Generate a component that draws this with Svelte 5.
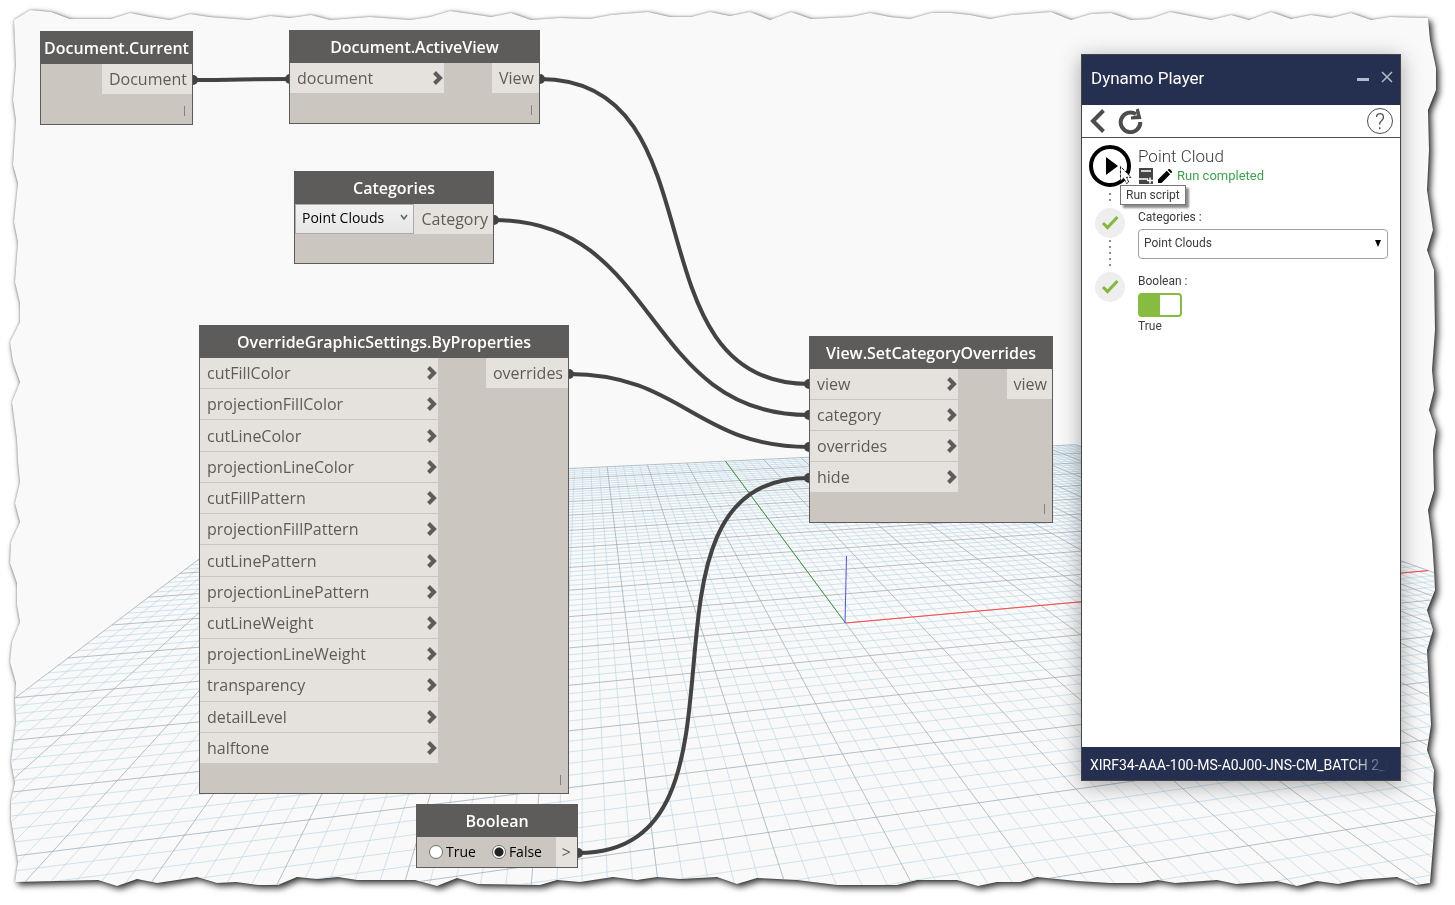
<script lang="ts">
  interface GraphNode {
    id: string;
    title: string;
    x: number;
    y: number;
    width: number;
    height: number;
    inputWidth: number;
    inputs: string[];
    output: string;
    lacing: boolean;
  }

  type Point = [number, number];

  const nodes: GraphNode[] = [
    { id: 'current', title: 'Document.Current', x: 40, y: 31, width: 153, height: 94, inputWidth: 0, inputs: [], output: 'Document', lacing: true },
    { id: 'active', title: 'Document.ActiveView', x: 289, y: 30, width: 251, height: 94, inputWidth: 154, inputs: ['document'], output: 'View', lacing: true },
    { id: 'categories', title: 'Categories', x: 294, y: 171, width: 200, height: 93, inputWidth: 119, inputs: [], output: 'Category', lacing: false },
    {
      id: 'settings', title: 'OverrideGraphicSettings.ByProperties', x: 199, y: 325, width: 370, height: 469, inputWidth: 238,
      inputs: [
        'cutFillColor', 'projectionFillColor', 'cutLineColor', 'projectionLineColor', 'cutFillPattern',
        'projectionFillPattern', 'cutLinePattern', 'projectionLinePattern', 'cutLineWeight',
        'projectionLineWeight', 'transparency', 'detailLevel', 'halftone',
      ],
      output: 'overrides', lacing: true,
    },
    { id: 'set', title: 'View.SetCategoryOverrides', x: 809, y: 336, width: 244, height: 187, inputWidth: 148, inputs: ['view', 'category', 'overrides', 'hide'], output: 'view', lacing: true },
    { id: 'boolean', title: 'Boolean', x: 416, y: 804, width: 162, height: 64, inputWidth: 138, inputs: [], output: '>', lacing: false },
  ];

  const wires: { from: Point; to: Point }[] = [
    { from: [193, 80], to: [290, 79] },
    { from: [540, 79], to: [809, 384] },
    { from: [494, 220], to: [809, 415] },
    { from: [569, 374], to: [809, 447] },
    { from: [578, 853], to: [809, 478] },
  ];

  function wirePath(from: Point, to: Point): string {
    const reach = 0.45 * Math.hypot(to[0] - from[0], to[1] - from[1]);
    return `M${from[0]} ${from[1]}C${from[0] + reach} ${from[1]} ${to[0] - reach} ${to[1]} ${to[0]} ${to[1]}`;
  }

  // Ground plane, one unit per major square, seen in perspective
  const ORIGIN: Point = [845.5, 623];
  const VANISH_X: Point = [4758, 271];
  const VANISH_Y: Point = [583, 269];

  function project(u: number, v: number): Point {
    const a = 0.0175 * u;
    const b = -0.0842 * v;
    const w = 1 + a + b;
    return [
      (ORIGIN[0] + a * VANISH_X[0] + b * VANISH_Y[0]) / w,
      (ORIGIN[1] + a * VANISH_X[1] + b * VANISH_Y[1]) / w,
    ];
  }

  function segment(u1: number, v1: number, u2: number, v2: number): string {
    const [x1, y1] = project(u1, v1);
    const [x2, y2] = project(u2, v2);
    return `M${x1.toFixed(1)} ${y1.toFixed(1)}L${x2.toFixed(1)} ${y2.toFixed(1)}`;
  }

  let minorGrid = '';
  let majorGrid = '';
  for (let i = -50; i <= 50; i++) {
    const k = i / 5;
    const lines = segment(k, -10, k, 8) + (k <= 8 ? segment(-10, k, 10, k) : '');
    if (i % 5 === 0) majorGrid += lines;
    else minorGrid += lines;
  }

  // Torn outline of the sheet, clockwise from the top left
  const tear = [
    '14,20 30,10 51,12 70,19 111,19 130,13 150,17 170,20 190,14 209,17 249,20 270,16 290,18 311,15 330,20 370,17 410,20 430,17 450,11 471,14 491,17 511,13 531,20',
    '560,18 590,19 611,15 648,12 670,17 691,17 710,12 730,16 750,12 770,20 791,12 811,19 851,17 870,13 890,17 910,19 931,13 951,13 970,15 990,19 1011,15 1051,12',
    '1071,20 1091,14 1111,13 1131,20 1150,19 1170,12 1211,20 1231,15 1249,20 1271,12 1291,19 1311,15 1331,18 1351,13 1371,20 1390,17 1428,18',
    '1430,40 1436,68 1436,90 1428,110 1429,150 1427,190 1433,230 1427,250 1434,270 1435,330 1432,370 1434,390 1429,410 1436,430 1433,450 1434,490 1428,510 1432,540',
    '1434,570 1435,590 1427,610 1433,630 1427,650 1431,725 1427,750 1434,770 1433,790 1436,810 1430,883',
    '1416,885 1397,877 1358,880 1338,884 1317,881 1297,886 1277,881 1236,884 1217,880 1175,883 1158,880 1140,883 1110,883 1077,881 1037,877 1020,882 997,882 978,886',
    '957,880 917,880 897,885 837,885 797,880 757,878 737,884 717,877 680,879 657,877 637,880 613,877 580,882 557,880 540,885 478,884 457,878 437,886 415,880 357,880',
    '338,877 317,879 297,877 278,885 258,885 236,882 217,883 197,877 157,883 137,879 117,886 98,880 15,882',
    '18,862 11,820 11,800 15,783 11,762 16,722 15,700 16,683 10,662 12,642 20,622 17,605 17,583 10,563 11,542 20,522 15,503 20,482 18,462 17,440',
    '12,402 20,382 13,362 10,342 20,322 20,303 15,282 18,242 14,222 18,183 13,165 16,120 13,100 16,65',
  ].join(' ');

  let category = $state('Point Clouds');
  let playerCategory = $state('Point Clouds');
  let hidden = $state('False');
  let playerBoolean = $state(true);
</script>

<div class="sheet">
  <main class="workspace">
    <svg class="backdrop" width="1455" height="905" aria-hidden="true">
      <defs>
        <clipPath id="tear"><polygon points={tear} /></clipPath>
      </defs>
      <path class="grid-minor" d={minorGrid} />
      <path class="grid-major" d={majorGrid} />
      <path class="axis-x" d={segment(0, 0, 10, 0)} />
      <path class="axis-y" d={segment(0, 0, 0, -10)} />
      <path class="axis-z" d="M845 623L846.5 556" />
      {#each wires as wire}
        <path class="wire" d={wirePath(wire.from, wire.to)} />
        <circle class="wire-end" cx={wire.from[0]} cy={wire.from[1]} r="5" />
        <circle class="wire-end" cx={wire.to[0]} cy={wire.to[1]} r="5" />
      {/each}
    </svg>

    {#each nodes as node (node.id)}
      <section
        class="node"
        style="left: {node.x}px; top: {node.y}px; width: {node.width}px; height: {node.height}px; --input-width: {node.inputWidth}px"
      >
        <h2 class="node-title">{node.title}</h2>
        <div class="node-body" class:compact={node.id === 'boolean'}>
          {#if node.id === 'categories'}
            <div class="node-select">
              <select aria-label="Category" bind:value={category}>
                <option>Point Clouds</option>
                <option>Walls</option>
              </select>
              <svg viewBox="0 0 8 6" width="8" height="6" aria-hidden="true"><path d="M1 1l3 4 3-4" /></svg>
            </div>
          {:else if node.id === 'boolean'}
            <div class="radios">
              <label><input type="radio" name="hide" value="True" bind:group={hidden} />True</label>
              <label><input type="radio" name="hide" value="False" bind:group={hidden} />False</label>
            </div>
          {:else}
            <ul class="inputs">
              {#each node.inputs as input}
                <li class="input">
                  <span>{input}</span>
                  <svg viewBox="0 0 10 14" width="10" height="14" aria-hidden="true"><path d="M1.5 1.5L7 7l-5.500 5.500" /></svg>
                </li>
              {/each}
            </ul>
          {/if}
          <span class="output">{node.output}</span>
        </div>
        {#if node.lacing}<span class="lacing">l</span>{/if}
      </section>
    {/each}

    <aside class="player">
      <header class="player-head">
        <h1>Dynamo Player</h1>
        <button class="plain" aria-label="Minimize">
          <svg viewBox="0 0 12 12" width="12" height="12"><path d="M0 8.500H12" stroke-width="3" /></svg>
        </button>
        <button class="plain" aria-label="Close">
          <svg viewBox="0 0 12 12" width="12" height="12"><path d="M1 1l10 10M11 1L1 11" stroke-width="1.500" /></svg>
        </button>
      </header>

      <nav class="toolbar">
        <button class="plain" aria-label="Back">
          <svg viewBox="0 0 16 24" width="16" height="24"><path d="M14.500 1.500L4 12l10.500 10.500" stroke-width="4" /></svg>
        </button>
        <button class="plain" aria-label="Refresh">
          <svg viewBox="0 0 25 26" width="25" height="26">
            <path d="M18 6.200A9.800 9.800 0 1 0 22.300 14" stroke-width="4" />
            <path d="M20.800 0.500L23.500 11L13 11.500V8.500L18.800 7.500L17.800 1.500Z" fill="#4d4d4d" stroke="none" />
          </svg>
        </button>
        <button class="plain help" aria-label="Help">?</button>
      </nav>

      <div class="steps">
        <div class="step script">
          <div class="marker">
            <button class="plain play" aria-label="Run script">
              <svg viewBox="0 0 42 42" width="42" height="42">
                <circle cx="21" cy="21" r="19" fill="none" stroke="#000" stroke-width="4" />
                <path d="M17 12v18l12-9z" fill="#000" stroke="none" />
              </svg>
            </button>
            <i class="dots short"></i>
            <svg class="cursor" viewBox="0 0 12 19" width="12" height="19" aria-hidden="true">
              <path d="M.5.5v14.500l3.300-3 2.700 5.500 2.400-1.200-2.500-5H11z" fill="#fff" stroke="#222" stroke-dasharray="3 1" />
            </svg>
            <span class="tooltip" role="tooltip">Run script</span>
          </div>
          <div class="info">
            <h3>Point Cloud</h3>
            <div class="status">
              <svg viewBox="0 0 14 16" width="14" height="16" aria-hidden="true">
                <path d="M0 0h14v16H0z" fill="#444" stroke="none" />
                <path d="M2 3h10M0 11h9M8 12.500h6M11 9.500v6" stroke="#fff" stroke-width="1.500" />
              </svg>
              <svg viewBox="0 0 14 14" width="14" height="14" aria-hidden="true">
                <path d="M0 14v-3.500L8.800 1.800l3.400 3.400L3.500 14zM9.700.900l.6-.6q.8-.6 1.600 0l1.800 1.800q.6.8 0 1.600l-.7.6z" fill="#000" stroke="none" />
              </svg>
              <span>Run completed</span>
            </div>
          </div>
        </div>

        <div class="step">
          <div class="marker">
            <svg viewBox="0 0 30 30" width="30" height="30" aria-hidden="true">
              <circle cx="15" cy="15" r="15" fill="#eee" />
              <path d="M8 15l4.500 4.500L22.500 9" stroke="#82b93c" stroke-width="3" />
            </svg>
            <i class="dots"></i>
          </div>
          <div class="field">
            <label for="player-category">Categories :</label>
            <div class="combo">
              <select id="player-category" bind:value={playerCategory}>
                <option>Point Clouds</option>
                <option>Walls</option>
              </select>
              <svg viewBox="0 0 6 7" width="6" height="7" aria-hidden="true"><path d="M0 0h6L3 7z" /></svg>
            </div>
          </div>
        </div>

        <div class="step">
          <div class="marker">
            <svg viewBox="0 0 30 30" width="30" height="30" aria-hidden="true">
              <circle cx="15" cy="15" r="15" fill="#eee" />
              <path d="M8 15l4.500 4.500L22.500 9" stroke="#82b93c" stroke-width="3" />
            </svg>
          </div>
          <div class="field">
            <label for="player-boolean">Boolean :</label>
            <input id="player-boolean" class="switch" type="checkbox" bind:checked={playerBoolean} />
            <span>{playerBoolean ? 'True' : 'False'}</span>
          </div>
        </div>
      </div>

      <footer class="player-foot"><span>XIRF34-AAA-100-MS-A0J00-JNS-CM_BATCH 2_E</span></footer>
    </aside>
  </main>
</div>

<style>
  :global(body) {
    margin: 0;
    background: #fff;
  }

  .sheet {
    filter: drop-shadow(0 0 1px rgba(0, 0, 0, 0.4)) drop-shadow(3px 3px 3px rgba(0, 0, 0, 0.8));
  }

  .workspace {
    position: relative;
    min-height: 100vh;
    overflow: hidden;
    background: #f9f9f9;
    clip-path: url(#tear);
    font-family: 'Open Sans', 'Noto Sans', sans-serif;
    font-size: 16px;
    line-height: 20px;
    color: #5e5c5a;
  }

  h1,
  h2,
  h3,
  ul {
    margin: 0;
    padding: 0;
    list-style: none;
  }

  .backdrop {
    position: absolute;
    top: 0;
    left: 0;
    fill: none;
  }

  .grid-minor {
    stroke: #b4d3e4;
    stroke-opacity: 0.6;
  }

  .grid-major {
    stroke: #9dabb5;
    stroke-opacity: 0.75;
  }

  .axis-x {
    stroke: #ff4a4a;
  }

  .axis-y {
    stroke: #3a9c3a;
  }

  .axis-z {
    stroke: #5050ff;
  }

  .wire {
    stroke: #434343;
    stroke-width: 4;
  }

  .wire-end {
    fill: #434343;
  }

  /* Graph nodes */
  .node {
    position: absolute;
    box-sizing: border-box;
    display: flex;
    flex-direction: column;
    background: #cbc6bf;
    border: 1px solid #5e5c5a;
  }

  .node-title {
    flex: none;
    background: #5e5c5a;
    color: #fff;
    font-size: 16px;
    font-weight: 600;
    line-height: 32px;
    text-align: center;
    white-space: nowrap;
  }

  .node-body {
    flex: 1;
    display: grid;
    grid-template-columns: var(--input-width) auto;
    justify-content: space-between;
    padding-bottom: 30px;
  }

  .node-body.compact {
    padding-bottom: 0;
  }

  .inputs {
    display: flex;
    flex-direction: column;
  }

  .input {
    flex: 1;
    display: flex;
    align-items: center;
    justify-content: space-between;
    padding: 0 1px 0 7px;
    background: #e5e2dd;
  }

  .input + .input {
    border-top: 1px solid #cbc6bf;
  }

  .input svg {
    fill: none;
    stroke: #5e5c5a;
    stroke-width: 4;
  }

  .output {
    height: 30px;
    padding: 0 5px 0 7px;
    background: #e5e2dd;
    line-height: 30px;
  }

  .lacing {
    position: absolute;
    right: 6px;
    bottom: 3px;
    font-size: 12px;
    line-height: 18px;
    color: #7d828a;
  }

  .node-select {
    position: relative;
    height: 30px;
  }

  .node-select select {
    width: 100%;
    height: 100%;
    box-sizing: border-box;
    padding: 0 6px 4px;
    appearance: none;
    background: linear-gradient(#f2f2f2, #e6e6e6);
    border: 1px solid #acacac;
    border-radius: 0;
    color: #000;
    font: 14px 'Open Sans', sans-serif;
  }

  .node-select svg {
    position: absolute;
    right: 6px;
    top: 10px;
    fill: none;
    stroke: #606060;
    stroke-width: 1.500;
  }

  .radios {
    display: flex;
    align-items: center;
    gap: 16px;
    padding-left: 12px;
    color: #000;
    font-size: 14px;
  }

  .radios label {
    display: flex;
    align-items: center;
    gap: 3px;
  }

  .radios input {
    width: 14px;
    height: 14px;
    margin: 0;
    box-sizing: border-box;
    appearance: none;
    background: #fff;
    border: 1px solid #707070;
    border-radius: 50%;
  }

  .radios input:checked {
    background: radial-gradient(circle, #212121 4px, #fff 5px);
  }

  .compact .output {
    padding: 0 6px;
    font-size: 16px;
  }

  /* Player window */
  .player {
    position: absolute;
    left: 1081px;
    top: 54px;
    width: 320px;
    height: 727px;
    box-sizing: border-box;
    display: flex;
    flex-direction: column;
    background: #fff;
    border: 1px solid #444;
    box-shadow: 0 4px 20px rgba(0, 0, 0, 0.35);
    font-family: Roboto, 'Open Sans', sans-serif;
    font-size: 13px;
    line-height: 18px;
    color: #3c3c3c;
  }

  .plain {
    display: flex;
    padding: 0;
    background: none;
    border: 0;
    cursor: pointer;
  }

  .player svg {
    flex: none;
    fill: none;
  }

  .player-head {
    display: flex;
    align-items: center;
    gap: 12px;
    height: 50px;
    padding: 0 7px 0 9px;
    box-sizing: border-box;
    background: #252f4f;
    color: #fff;
  }

  .player-head h1 {
    flex: 1;
    padding-bottom: 4px;
    font-size: 17px;
    font-weight: 400;
  }

  .player-head svg {
    stroke: #b5b9c8;
    padding-bottom: 6px;
  }

  .toolbar {
    display: flex;
    align-items: center;
    gap: 13px;
    height: 32px;
    padding: 0 7px;
    border-bottom: 1px solid #4d4d4d;
    stroke: #4d4d4d;
  }

  .help {
    width: 26px;
    height: 26px;
    margin-left: auto;
    box-sizing: border-box;
    align-items: center;
    justify-content: center;
    border: 1px solid #4d4d4d;
    border-radius: 50%;
    color: #4d4d4d;
    font: 300 22px Roboto, sans-serif;
  }

  .steps {
    flex: 1;
    padding: 0 12px 0 7px;
  }

  .step {
    display: grid;
    grid-template-columns: 42px 1fr;
    column-gap: 7px;
    height: 64px;
  }

  .step.script {
    height: 70px;
  }

  .marker {
    position: relative;
    display: flex;
    flex-direction: column;
    align-items: center;
  }

  .script .marker {
    padding-top: 7px;
  }

  .dots {
    width: 2px;
    height: 26px;
    margin-top: 2px;
    background: repeating-linear-gradient(#8c8c8c 0 2px, transparent 2px 6px);
  }

  .dots.short {
    height: 8px;
    margin-top: 6px;
  }

  .cursor {
    position: absolute;
    left: 31px;
    top: 28px;
    z-index: 1;
  }

  .tooltip {
    position: absolute;
    left: 31px;
    top: 47px;
    padding: 0 5px;
    background: #fff;
    border: 1px solid #767676;
    box-shadow: 3px 3px 2px rgba(0, 0, 0, 0.45);
    font-size: 12px;
    white-space: nowrap;
  }

  .info {
    padding-top: 8px;
  }

  .info h3 {
    font-size: 17px;
    font-weight: 300;
    line-height: 20px;
  }

  .status {
    display: flex;
    align-items: center;
    gap: 5px;
    padding: 1px;
    color: #3fa34d;
  }

  .field {
    display: flex;
    flex-direction: column;
    align-items: flex-start;
    font-size: 12px;
  }

  .field label {
    padding-bottom: 3px;
  }

  .combo {
    position: relative;
    width: 100%;
  }

  .combo select {
    width: 100%;
    height: 30px;
    padding: 0 5px 2px;
    appearance: none;
    background: #fff;
    border: 1px solid #a0a0a0;
    border-radius: 4px;
    color: #3c3c3c;
    font: 12px Roboto, sans-serif;
  }

  .combo svg {
    position: absolute;
    right: 7px;
    top: 11px;
    fill: #000;
  }

  .switch {
    width: 44px;
    height: 24px;
    margin: 0;
    appearance: none;
    background: linear-gradient(90deg, #fff 20px, #b3b3b3 20px);
    border: 2px solid #b3b3b3;
    border-radius: 4px;
  }

  .switch:checked {
    background: linear-gradient(90deg, #86bc40 20px, #fff 20px);
    border-color: #86bc40;
  }

  .player-foot {
    padding: 9px 12px 6px 8px;
    background: #252f4f;
    color: #fff;
    font-size: 14px;
  }

  .player-foot span {
    display: block;
    overflow: hidden;
    white-space: nowrap;
    mask-image: linear-gradient(90deg, #000 88%, transparent);
  }
</style>
